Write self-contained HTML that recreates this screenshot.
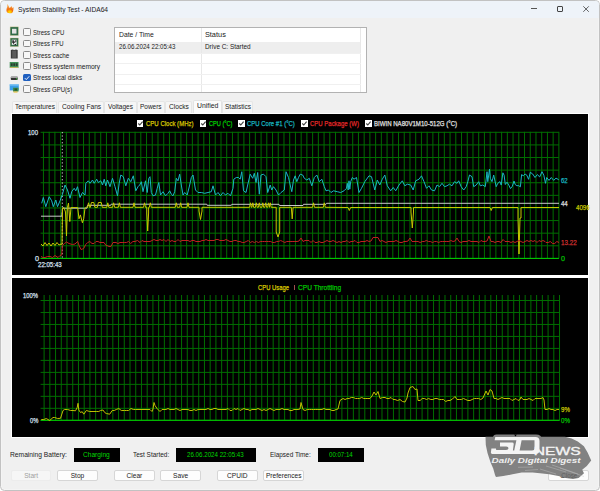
<!DOCTYPE html>
<html><head><meta charset="utf-8"><style>
html,body{margin:0;padding:0;width:600px;height:491px;overflow:hidden;background:#fff}
body{position:relative;font-family:"Liberation Sans",sans-serif}
.t{position:absolute;white-space:nowrap;font-family:"Liberation Sans",sans-serif;transform-origin:0 0}
</style></head><body>
<div style="position:absolute;left:0px;top:0px;width:600px;height:491px;box-sizing:border-box;border:1px solid #c2c2c2;border-radius:4.5px;background:#f0f0f0;box-shadow:inset 0 0 0 1px #f4f4f4"></div>
<div style="position:absolute;left:1px;top:1px;width:598px;height:16.5px;background:#eef3f9;border-radius:3.5px 3.5px 0 0"></div>
<svg style="position:absolute;left:0;top:0" width="20" height="17" viewBox="0 0 20 17">
<defs><radialGradient id="fl" cx="9.7" cy="12.2" r="6.5" gradientUnits="userSpaceOnUse"><stop offset="0" stop-color="#ffe000"/><stop offset="0.22" stop-color="#ffbb00"/><stop offset="0.5" stop-color="#f26a12"/><stop offset="1" stop-color="#f8ac50"/></radialGradient></defs>
<path d="M7.3,4.1 C8.3,5.5 9.3,7 9.6,8.3 C10.3,7.5 11,6.8 11.6,6.1 C11.8,7 12,7.5 12.3,8 C12.8,7.8 13.3,7.4 13.6,7.1 C13.6,9 13.5,11 12.5,12.5 C11.7,13.3 10.5,13.4 9.5,13.3 C8,13.2 6.8,12.5 6.5,11 C6.2,9.5 6.8,8 7.2,7 C7.5,6 7.2,5 7.3,4.1Z" fill="url(#fl)"/>
</svg>
<div class="t" style="left:18.00px;top:4.00px;font-size:7.400px;line-height:12px;letter-spacing:0.000px;transform:scaleX(0.9038);color:#1a1a1a;">System Stability Test - AIDA64</div>
<div style="position:absolute;left:531px;top:8.2px;width:6px;height:0.9px;background:#555"></div>
<div style="position:absolute;left:557px;top:6px;width:6px;height:6px;box-sizing:border-box;border:1px solid #444;border-radius:1px"></div>
<svg style="position:absolute;left:582px;top:5px" width="8" height="8" viewBox="0 0 8 8"><path d="M1.3 1.3L6.8 6.8M6.8 1.3L1.3 6.8" stroke="#333" stroke-width="0.75"/></svg>
<div style="position:absolute;left:23px;top:28.400000000000002px;width:7.5px;height:7.5px;box-sizing:border-box;border:1px solid #8a8a8a;background:#f7f7f7;border-radius:1.5px"></div>
<div class="t" style="left:32.80px;top:27.00px;font-size:7.400px;line-height:12px;letter-spacing:0.000px;transform:scaleX(0.8124);color:#1a1a1a;">Stress CPU</div>
<div style="position:absolute;left:23px;top:39.699999999999996px;width:7.5px;height:7.5px;box-sizing:border-box;border:1px solid #8a8a8a;background:#f7f7f7;border-radius:1.5px"></div>
<div class="t" style="left:32.80px;top:38.00px;font-size:7.400px;line-height:12px;letter-spacing:0.000px;transform:scaleX(0.8063);color:#1a1a1a;">Stress FPU</div>
<div style="position:absolute;left:23px;top:51.0px;width:7.5px;height:7.5px;box-sizing:border-box;border:1px solid #8a8a8a;background:#f7f7f7;border-radius:1.5px"></div>
<div class="t" style="left:32.80px;top:50.00px;font-size:7.400px;line-height:12px;letter-spacing:0.000px;transform:scaleX(0.8510);color:#1a1a1a;">Stress cache</div>
<div style="position:absolute;left:23px;top:62.39999999999999px;width:7.5px;height:7.5px;box-sizing:border-box;border:1px solid #8a8a8a;background:#f7f7f7;border-radius:1.5px"></div>
<div class="t" style="left:32.80px;top:61.00px;font-size:7.400px;line-height:12px;letter-spacing:0.000px;transform:scaleX(0.8931);color:#1a1a1a;">Stress system memory</div>
<div style="position:absolute;left:23px;top:73.7px;width:7.5px;height:7.5px;box-sizing:border-box;background:#1f5fbf;border-radius:1.5px"></div>
<svg style="position:absolute;left:23px;top:73.7px" width="8" height="8" viewBox="0 0 8 8"><path d="M1.8 4.1L3.3 5.6L6.2 2.3" fill="none" stroke="#fff" stroke-width="0.9"/></svg>
<div class="t" style="left:32.80px;top:72.00px;font-size:7.400px;line-height:12px;letter-spacing:0.000px;transform:scaleX(0.8607);color:#1a1a1a;">Stress local disks</div>
<div style="position:absolute;left:23px;top:85.2px;width:7.5px;height:7.5px;box-sizing:border-box;border:1px solid #8a8a8a;background:#f7f7f7;border-radius:1.5px"></div>
<div class="t" style="left:32.80px;top:84.00px;font-size:7.400px;line-height:12px;letter-spacing:0.000px;transform:scaleX(0.8219);color:#1a1a1a;">Stress GPU(s)</div>
<svg style="position:absolute;left:0;top:0" width="24" height="96" viewBox="0 0 24 96">
<rect x="10.1" y="26.9" width="8.3" height="8.6" fill="#2f6b47" stroke="#d8c890" stroke-width="0.4"/>
<rect x="12" y="28.8" width="4.5" height="4.8" fill="#e2e2e2"/>
<rect x="10.1" y="38" width="8.3" height="8.6" fill="#2f6b47" stroke="#d8c890" stroke-width="0.4"/>
<rect x="11.8" y="39.7" width="4.9" height="5.2" fill="#e8e8e8"/>
<path d="M12.3,40.3 h1.6 v1.2 h1.4 v1.3 h-1.4 v1.3 h2.2 v1.2 h-1.4 v-1.1 h-1.6 v-1.3 h-0.8z M15.2,40.3 h1.2 v1.5 h-1.2z" fill="#2a2a2a"/>
<path d="M10.8,50 L12.5,49.4 L14.2,50 L16,49.4 L17.7,50 V58.4 H10.8Z" fill="#3a3a3a"/>
<rect x="12.2" y="50.6" width="4.1" height="7.2" fill="#5a5a5a"/>
<rect x="9.7" y="62" width="8.8" height="5.9" fill="#3f8f55"/>
<rect x="10.8" y="63.3" width="1.8" height="2.6" fill="#2a3a30"/><rect x="13.3" y="63.3" width="1.8" height="2.6" fill="#2a3a30"/><rect x="15.8" y="63.3" width="1.8" height="2.6" fill="#2a3a30"/>
<rect x="10" y="67" width="8.2" height="0.9" fill="#c8b860"/>
<rect x="10.8" y="76.6" width="6.9" height="3.5" rx="0.8" fill="#333"/>
<rect x="10.8" y="76.6" width="6.9" height="1.2" rx="0.5" fill="#c8c8c8"/>
<rect x="16" y="78.3" width="1.1" height="1" fill="#3c3"/>
<rect x="9.7" y="84.4" width="9.1" height="6" fill="#3a9ee8"/>
<rect x="9.7" y="84.4" width="9.1" height="1.2" fill="#7cc4f4"/>
<rect x="13" y="87.7" width="5.5" height="3.8" fill="#3d8a4a"/>
<rect x="14.5" y="88.5" width="2.5" height="2" fill="#245030"/>
<rect x="13.5" y="91.5" width="4" height="1" fill="#e8b820"/>
</svg>
<div style="position:absolute;left:114px;top:27px;width:253px;height:66px;box-sizing:border-box;border:1px solid #b2b2b2;background:#fff"></div>
<div style="position:absolute;left:115px;top:42px;width:246px;height:10.5px;background:#eeeeee"></div>
<div style="position:absolute;left:200.5px;top:28px;width:0.8px;height:64px;background:#e8e8e8"></div>
<div style="position:absolute;left:360.2px;top:28px;width:0.8px;height:64px;background:#e8e8e8"></div>
<div style="position:absolute;left:115px;top:52.7px;width:246px;height:0.8px;background:#f0f0f0"></div>
<div style="position:absolute;left:115px;top:63.2px;width:246px;height:0.8px;background:#f0f0f0"></div>
<div style="position:absolute;left:115px;top:73.7px;width:246px;height:0.8px;background:#f0f0f0"></div>
<div style="position:absolute;left:115px;top:84.2px;width:246px;height:0.8px;background:#f0f0f0"></div>
<div class="t" style="left:118.50px;top:29.00px;font-size:7.400px;line-height:12px;letter-spacing:0.000px;transform:scaleX(0.9198);color:#1a1a1a;">Date / Time</div>
<div class="t" style="left:204.90px;top:29.00px;font-size:7.400px;line-height:12px;letter-spacing:0.000px;color:#1a1a1a;">Status</div>
<div class="t" style="left:118.50px;top:41.00px;font-size:7.400px;line-height:12px;letter-spacing:0.000px;transform:scaleX(0.8322);color:#1a1a1a;">26.06.2024 22:05:43</div>
<div class="t" style="left:204.90px;top:41.00px;font-size:7.400px;line-height:12px;letter-spacing:0.000px;transform:scaleX(0.8663);color:#1a1a1a;">Drive C: Started</div>
<div style="position:absolute;left:12.2px;top:100.8px;width:44.8px;height:12.7px;box-sizing:border-box;background:#f6f6f6;border:1px solid #e6e6e6;border-bottom:none;border-radius:2px 2px 0 0"></div>
<div class="t" style="left:14.75px;top:101.00px;font-size:7.400px;line-height:12px;letter-spacing:0.000px;transform:scaleX(0.8852);color:#1a1a1a;">Temperatures</div>
<div style="position:absolute;left:57.5px;top:100.8px;width:46.099999999999994px;height:12.7px;box-sizing:border-box;background:#f6f6f6;border:1px solid #e6e6e6;border-bottom:none;border-radius:2px 2px 0 0"></div>
<div class="t" style="left:61.80px;top:101.00px;font-size:7.400px;line-height:12px;letter-spacing:0.000px;transform:scaleX(0.8991);color:#1a1a1a;">Cooling Fans</div>
<div style="position:absolute;left:104.0px;top:100.8px;width:32.900000000000006px;height:12.7px;box-sizing:border-box;background:#f6f6f6;border:1px solid #e6e6e6;border-bottom:none;border-radius:2px 2px 0 0"></div>
<div class="t" style="left:107.90px;top:101.00px;font-size:7.400px;line-height:12px;letter-spacing:0.000px;transform:scaleX(0.8772);color:#1a1a1a;">Voltages</div>
<div style="position:absolute;left:137.3px;top:100.8px;width:27.399999999999977px;height:12.7px;box-sizing:border-box;background:#f6f6f6;border:1px solid #e6e6e6;border-bottom:none;border-radius:2px 2px 0 0"></div>
<div class="t" style="left:140.40px;top:101.00px;font-size:7.400px;line-height:12px;letter-spacing:0.000px;transform:scaleX(0.8752);color:#1a1a1a;">Powers</div>
<div style="position:absolute;left:165.0px;top:100.8px;width:27.0px;height:12.7px;box-sizing:border-box;background:#f6f6f6;border:1px solid #e6e6e6;border-bottom:none;border-radius:2px 2px 0 0"></div>
<div class="t" style="left:169.00px;top:101.00px;font-size:7.400px;line-height:12px;letter-spacing:0.000px;transform:scaleX(0.8961);color:#1a1a1a;">Clocks</div>
<div style="position:absolute;left:192.7px;top:99.7px;width:29.30000000000001px;height:14.3px;box-sizing:border-box;background:#fbfbfb;border:1px solid #e3e3e3;border-bottom:none;border-radius:2px 2px 0 0"></div>
<div class="t" style="left:196.70px;top:100.00px;font-size:7.400px;line-height:12px;letter-spacing:0.000px;transform:scaleX(0.9246);color:#1a1a1a;">Unified</div>
<div style="position:absolute;left:222.4px;top:100.8px;width:30.900000000000006px;height:12.7px;box-sizing:border-box;background:#f6f6f6;border:1px solid #e6e6e6;border-bottom:none;border-radius:2px 2px 0 0"></div>
<div class="t" style="left:225.00px;top:101.00px;font-size:7.400px;line-height:12px;letter-spacing:0.000px;transform:scaleX(0.8782);color:#1a1a1a;">Statistics</div>
<div style="position:absolute;left:10.5px;top:113px;width:578.7px;height:325px;background:#fff"></div>
<div style="position:absolute;left:12px;top:114px;width:576px;height:161px;background:#000"></div>
<div style="position:absolute;left:12px;top:278px;width:576px;height:158.7px;background:#000"></div>
<svg style="position:absolute;left:0;top:0" width="600" height="491" viewBox="0 0 600 491">
<line x1="43.45" y1="131.8" x2="43.45" y2="258.4" stroke="#006e00" stroke-width="1"/>
<line x1="49.18" y1="131.8" x2="49.18" y2="258.4" stroke="#006e00" stroke-width="1"/>
<line x1="54.90" y1="131.8" x2="54.90" y2="258.4" stroke="#006e00" stroke-width="1"/>
<line x1="60.63" y1="131.8" x2="60.63" y2="258.4" stroke="#006e00" stroke-width="1"/>
<line x1="66.36" y1="131.8" x2="66.36" y2="258.4" stroke="#006e00" stroke-width="1"/>
<line x1="72.09" y1="131.8" x2="72.09" y2="258.4" stroke="#006e00" stroke-width="1"/>
<line x1="77.81" y1="131.8" x2="77.81" y2="258.4" stroke="#006e00" stroke-width="1"/>
<line x1="83.54" y1="131.8" x2="83.54" y2="258.4" stroke="#006e00" stroke-width="1"/>
<line x1="89.27" y1="131.8" x2="89.27" y2="258.4" stroke="#006e00" stroke-width="1"/>
<line x1="94.99" y1="131.8" x2="94.99" y2="258.4" stroke="#006e00" stroke-width="1"/>
<line x1="100.72" y1="131.8" x2="100.72" y2="258.4" stroke="#006e00" stroke-width="1"/>
<line x1="106.45" y1="131.8" x2="106.45" y2="258.4" stroke="#006e00" stroke-width="1"/>
<line x1="112.17" y1="131.8" x2="112.17" y2="258.4" stroke="#006e00" stroke-width="1"/>
<line x1="117.90" y1="131.8" x2="117.90" y2="258.4" stroke="#006e00" stroke-width="1"/>
<line x1="123.63" y1="131.8" x2="123.63" y2="258.4" stroke="#006e00" stroke-width="1"/>
<line x1="129.36" y1="131.8" x2="129.36" y2="258.4" stroke="#006e00" stroke-width="1"/>
<line x1="135.08" y1="131.8" x2="135.08" y2="258.4" stroke="#006e00" stroke-width="1"/>
<line x1="140.81" y1="131.8" x2="140.81" y2="258.4" stroke="#006e00" stroke-width="1"/>
<line x1="146.54" y1="131.8" x2="146.54" y2="258.4" stroke="#006e00" stroke-width="1"/>
<line x1="152.26" y1="131.8" x2="152.26" y2="258.4" stroke="#006e00" stroke-width="1"/>
<line x1="157.99" y1="131.8" x2="157.99" y2="258.4" stroke="#006e00" stroke-width="1"/>
<line x1="163.72" y1="131.8" x2="163.72" y2="258.4" stroke="#006e00" stroke-width="1"/>
<line x1="169.44" y1="131.8" x2="169.44" y2="258.4" stroke="#006e00" stroke-width="1"/>
<line x1="175.17" y1="131.8" x2="175.17" y2="258.4" stroke="#006e00" stroke-width="1"/>
<line x1="180.90" y1="131.8" x2="180.90" y2="258.4" stroke="#006e00" stroke-width="1"/>
<line x1="186.62" y1="131.8" x2="186.62" y2="258.4" stroke="#006e00" stroke-width="1"/>
<line x1="192.35" y1="131.8" x2="192.35" y2="258.4" stroke="#006e00" stroke-width="1"/>
<line x1="198.08" y1="131.8" x2="198.08" y2="258.4" stroke="#006e00" stroke-width="1"/>
<line x1="203.81" y1="131.8" x2="203.81" y2="258.4" stroke="#006e00" stroke-width="1"/>
<line x1="209.53" y1="131.8" x2="209.53" y2="258.4" stroke="#006e00" stroke-width="1"/>
<line x1="215.26" y1="131.8" x2="215.26" y2="258.4" stroke="#006e00" stroke-width="1"/>
<line x1="220.99" y1="131.8" x2="220.99" y2="258.4" stroke="#006e00" stroke-width="1"/>
<line x1="226.71" y1="131.8" x2="226.71" y2="258.4" stroke="#006e00" stroke-width="1"/>
<line x1="232.44" y1="131.8" x2="232.44" y2="258.4" stroke="#006e00" stroke-width="1"/>
<line x1="238.17" y1="131.8" x2="238.17" y2="258.4" stroke="#006e00" stroke-width="1"/>
<line x1="243.90" y1="131.8" x2="243.90" y2="258.4" stroke="#006e00" stroke-width="1"/>
<line x1="249.62" y1="131.8" x2="249.62" y2="258.4" stroke="#006e00" stroke-width="1"/>
<line x1="255.35" y1="131.8" x2="255.35" y2="258.4" stroke="#006e00" stroke-width="1"/>
<line x1="261.08" y1="131.8" x2="261.08" y2="258.4" stroke="#006e00" stroke-width="1"/>
<line x1="266.80" y1="131.8" x2="266.80" y2="258.4" stroke="#006e00" stroke-width="1"/>
<line x1="272.53" y1="131.8" x2="272.53" y2="258.4" stroke="#006e00" stroke-width="1"/>
<line x1="278.26" y1="131.8" x2="278.26" y2="258.4" stroke="#006e00" stroke-width="1"/>
<line x1="283.98" y1="131.8" x2="283.98" y2="258.4" stroke="#006e00" stroke-width="1"/>
<line x1="289.71" y1="131.8" x2="289.71" y2="258.4" stroke="#006e00" stroke-width="1"/>
<line x1="295.44" y1="131.8" x2="295.44" y2="258.4" stroke="#006e00" stroke-width="1"/>
<line x1="301.17" y1="131.8" x2="301.17" y2="258.4" stroke="#006e00" stroke-width="1"/>
<line x1="306.89" y1="131.8" x2="306.89" y2="258.4" stroke="#006e00" stroke-width="1"/>
<line x1="312.62" y1="131.8" x2="312.62" y2="258.4" stroke="#006e00" stroke-width="1"/>
<line x1="318.35" y1="131.8" x2="318.35" y2="258.4" stroke="#006e00" stroke-width="1"/>
<line x1="324.07" y1="131.8" x2="324.07" y2="258.4" stroke="#006e00" stroke-width="1"/>
<line x1="329.80" y1="131.8" x2="329.80" y2="258.4" stroke="#006e00" stroke-width="1"/>
<line x1="335.53" y1="131.8" x2="335.53" y2="258.4" stroke="#006e00" stroke-width="1"/>
<line x1="341.25" y1="131.8" x2="341.25" y2="258.4" stroke="#006e00" stroke-width="1"/>
<line x1="346.98" y1="131.8" x2="346.98" y2="258.4" stroke="#006e00" stroke-width="1"/>
<line x1="352.71" y1="131.8" x2="352.71" y2="258.4" stroke="#006e00" stroke-width="1"/>
<line x1="358.44" y1="131.8" x2="358.44" y2="258.4" stroke="#006e00" stroke-width="1"/>
<line x1="364.16" y1="131.8" x2="364.16" y2="258.4" stroke="#006e00" stroke-width="1"/>
<line x1="369.89" y1="131.8" x2="369.89" y2="258.4" stroke="#006e00" stroke-width="1"/>
<line x1="375.62" y1="131.8" x2="375.62" y2="258.4" stroke="#006e00" stroke-width="1"/>
<line x1="381.34" y1="131.8" x2="381.34" y2="258.4" stroke="#006e00" stroke-width="1"/>
<line x1="387.07" y1="131.8" x2="387.07" y2="258.4" stroke="#006e00" stroke-width="1"/>
<line x1="392.80" y1="131.8" x2="392.80" y2="258.4" stroke="#006e00" stroke-width="1"/>
<line x1="398.52" y1="131.8" x2="398.52" y2="258.4" stroke="#006e00" stroke-width="1"/>
<line x1="404.25" y1="131.8" x2="404.25" y2="258.4" stroke="#006e00" stroke-width="1"/>
<line x1="409.98" y1="131.8" x2="409.98" y2="258.4" stroke="#006e00" stroke-width="1"/>
<line x1="415.70" y1="131.8" x2="415.70" y2="258.4" stroke="#006e00" stroke-width="1"/>
<line x1="421.43" y1="131.8" x2="421.43" y2="258.4" stroke="#006e00" stroke-width="1"/>
<line x1="427.16" y1="131.8" x2="427.16" y2="258.4" stroke="#006e00" stroke-width="1"/>
<line x1="432.89" y1="131.8" x2="432.89" y2="258.4" stroke="#006e00" stroke-width="1"/>
<line x1="438.61" y1="131.8" x2="438.61" y2="258.4" stroke="#006e00" stroke-width="1"/>
<line x1="444.34" y1="131.8" x2="444.34" y2="258.4" stroke="#006e00" stroke-width="1"/>
<line x1="450.07" y1="131.8" x2="450.07" y2="258.4" stroke="#006e00" stroke-width="1"/>
<line x1="455.79" y1="131.8" x2="455.79" y2="258.4" stroke="#006e00" stroke-width="1"/>
<line x1="461.52" y1="131.8" x2="461.52" y2="258.4" stroke="#006e00" stroke-width="1"/>
<line x1="467.25" y1="131.8" x2="467.25" y2="258.4" stroke="#006e00" stroke-width="1"/>
<line x1="472.98" y1="131.8" x2="472.98" y2="258.4" stroke="#006e00" stroke-width="1"/>
<line x1="478.70" y1="131.8" x2="478.70" y2="258.4" stroke="#006e00" stroke-width="1"/>
<line x1="484.43" y1="131.8" x2="484.43" y2="258.4" stroke="#006e00" stroke-width="1"/>
<line x1="490.16" y1="131.8" x2="490.16" y2="258.4" stroke="#006e00" stroke-width="1"/>
<line x1="495.88" y1="131.8" x2="495.88" y2="258.4" stroke="#006e00" stroke-width="1"/>
<line x1="501.61" y1="131.8" x2="501.61" y2="258.4" stroke="#006e00" stroke-width="1"/>
<line x1="507.34" y1="131.8" x2="507.34" y2="258.4" stroke="#006e00" stroke-width="1"/>
<line x1="513.06" y1="131.8" x2="513.06" y2="258.4" stroke="#006e00" stroke-width="1"/>
<line x1="518.79" y1="131.8" x2="518.79" y2="258.4" stroke="#006e00" stroke-width="1"/>
<line x1="524.52" y1="131.8" x2="524.52" y2="258.4" stroke="#006e00" stroke-width="1"/>
<line x1="530.25" y1="131.8" x2="530.25" y2="258.4" stroke="#006e00" stroke-width="1"/>
<line x1="535.97" y1="131.8" x2="535.97" y2="258.4" stroke="#006e00" stroke-width="1"/>
<line x1="541.70" y1="131.8" x2="541.70" y2="258.4" stroke="#006e00" stroke-width="1"/>
<line x1="547.43" y1="131.8" x2="547.43" y2="258.4" stroke="#006e00" stroke-width="1"/>
<line x1="553.15" y1="131.8" x2="553.15" y2="258.4" stroke="#006e00" stroke-width="1"/>
<line x1="558.88" y1="131.8" x2="558.88" y2="258.4" stroke="#006e00" stroke-width="1"/>
<line x1="40.6" y1="132.30" x2="558.9" y2="132.30" stroke="#006e00" stroke-width="1"/>
<line x1="40.6" y1="144.91" x2="558.9" y2="144.91" stroke="#006e00" stroke-width="1"/>
<line x1="40.6" y1="157.52" x2="558.9" y2="157.52" stroke="#006e00" stroke-width="1"/>
<line x1="40.6" y1="170.13" x2="558.9" y2="170.13" stroke="#006e00" stroke-width="1"/>
<line x1="40.6" y1="182.74" x2="558.9" y2="182.74" stroke="#006e00" stroke-width="1"/>
<line x1="40.6" y1="195.35" x2="558.9" y2="195.35" stroke="#006e00" stroke-width="1"/>
<line x1="40.6" y1="207.96" x2="558.9" y2="207.96" stroke="#006e00" stroke-width="1"/>
<line x1="40.6" y1="220.57" x2="558.9" y2="220.57" stroke="#006e00" stroke-width="1"/>
<line x1="40.6" y1="233.18" x2="558.9" y2="233.18" stroke="#006e00" stroke-width="1"/>
<line x1="40.6" y1="245.79" x2="558.9" y2="245.79" stroke="#006e00" stroke-width="1"/>
<line x1="40.6" y1="258.40" x2="558.9" y2="258.40" stroke="#006e00" stroke-width="1"/>
<line x1="44.10" y1="295" x2="44.10" y2="420.3" stroke="#006e00" stroke-width="1"/>
<line x1="49.83" y1="295" x2="49.83" y2="420.3" stroke="#006e00" stroke-width="1"/>
<line x1="55.55" y1="295" x2="55.55" y2="420.3" stroke="#006e00" stroke-width="1"/>
<line x1="61.28" y1="295" x2="61.28" y2="420.3" stroke="#006e00" stroke-width="1"/>
<line x1="67.01" y1="295" x2="67.01" y2="420.3" stroke="#006e00" stroke-width="1"/>
<line x1="72.73" y1="295" x2="72.73" y2="420.3" stroke="#006e00" stroke-width="1"/>
<line x1="78.46" y1="295" x2="78.46" y2="420.3" stroke="#006e00" stroke-width="1"/>
<line x1="84.19" y1="295" x2="84.19" y2="420.3" stroke="#006e00" stroke-width="1"/>
<line x1="89.92" y1="295" x2="89.92" y2="420.3" stroke="#006e00" stroke-width="1"/>
<line x1="95.64" y1="295" x2="95.64" y2="420.3" stroke="#006e00" stroke-width="1"/>
<line x1="101.37" y1="295" x2="101.37" y2="420.3" stroke="#006e00" stroke-width="1"/>
<line x1="107.10" y1="295" x2="107.10" y2="420.3" stroke="#006e00" stroke-width="1"/>
<line x1="112.82" y1="295" x2="112.82" y2="420.3" stroke="#006e00" stroke-width="1"/>
<line x1="118.55" y1="295" x2="118.55" y2="420.3" stroke="#006e00" stroke-width="1"/>
<line x1="124.28" y1="295" x2="124.28" y2="420.3" stroke="#006e00" stroke-width="1"/>
<line x1="130.00" y1="295" x2="130.00" y2="420.3" stroke="#006e00" stroke-width="1"/>
<line x1="135.73" y1="295" x2="135.73" y2="420.3" stroke="#006e00" stroke-width="1"/>
<line x1="141.46" y1="295" x2="141.46" y2="420.3" stroke="#006e00" stroke-width="1"/>
<line x1="147.19" y1="295" x2="147.19" y2="420.3" stroke="#006e00" stroke-width="1"/>
<line x1="152.91" y1="295" x2="152.91" y2="420.3" stroke="#006e00" stroke-width="1"/>
<line x1="158.64" y1="295" x2="158.64" y2="420.3" stroke="#006e00" stroke-width="1"/>
<line x1="164.37" y1="295" x2="164.37" y2="420.3" stroke="#006e00" stroke-width="1"/>
<line x1="170.09" y1="295" x2="170.09" y2="420.3" stroke="#006e00" stroke-width="1"/>
<line x1="175.82" y1="295" x2="175.82" y2="420.3" stroke="#006e00" stroke-width="1"/>
<line x1="181.55" y1="295" x2="181.55" y2="420.3" stroke="#006e00" stroke-width="1"/>
<line x1="187.28" y1="295" x2="187.28" y2="420.3" stroke="#006e00" stroke-width="1"/>
<line x1="193.00" y1="295" x2="193.00" y2="420.3" stroke="#006e00" stroke-width="1"/>
<line x1="198.73" y1="295" x2="198.73" y2="420.3" stroke="#006e00" stroke-width="1"/>
<line x1="204.46" y1="295" x2="204.46" y2="420.3" stroke="#006e00" stroke-width="1"/>
<line x1="210.18" y1="295" x2="210.18" y2="420.3" stroke="#006e00" stroke-width="1"/>
<line x1="215.91" y1="295" x2="215.91" y2="420.3" stroke="#006e00" stroke-width="1"/>
<line x1="221.64" y1="295" x2="221.64" y2="420.3" stroke="#006e00" stroke-width="1"/>
<line x1="227.36" y1="295" x2="227.36" y2="420.3" stroke="#006e00" stroke-width="1"/>
<line x1="233.09" y1="295" x2="233.09" y2="420.3" stroke="#006e00" stroke-width="1"/>
<line x1="238.82" y1="295" x2="238.82" y2="420.3" stroke="#006e00" stroke-width="1"/>
<line x1="244.55" y1="295" x2="244.55" y2="420.3" stroke="#006e00" stroke-width="1"/>
<line x1="250.27" y1="295" x2="250.27" y2="420.3" stroke="#006e00" stroke-width="1"/>
<line x1="256.00" y1="295" x2="256.00" y2="420.3" stroke="#006e00" stroke-width="1"/>
<line x1="261.73" y1="295" x2="261.73" y2="420.3" stroke="#006e00" stroke-width="1"/>
<line x1="267.45" y1="295" x2="267.45" y2="420.3" stroke="#006e00" stroke-width="1"/>
<line x1="273.18" y1="295" x2="273.18" y2="420.3" stroke="#006e00" stroke-width="1"/>
<line x1="278.91" y1="295" x2="278.91" y2="420.3" stroke="#006e00" stroke-width="1"/>
<line x1="284.63" y1="295" x2="284.63" y2="420.3" stroke="#006e00" stroke-width="1"/>
<line x1="290.36" y1="295" x2="290.36" y2="420.3" stroke="#006e00" stroke-width="1"/>
<line x1="296.09" y1="295" x2="296.09" y2="420.3" stroke="#006e00" stroke-width="1"/>
<line x1="301.82" y1="295" x2="301.82" y2="420.3" stroke="#006e00" stroke-width="1"/>
<line x1="307.54" y1="295" x2="307.54" y2="420.3" stroke="#006e00" stroke-width="1"/>
<line x1="313.27" y1="295" x2="313.27" y2="420.3" stroke="#006e00" stroke-width="1"/>
<line x1="319.00" y1="295" x2="319.00" y2="420.3" stroke="#006e00" stroke-width="1"/>
<line x1="324.72" y1="295" x2="324.72" y2="420.3" stroke="#006e00" stroke-width="1"/>
<line x1="330.45" y1="295" x2="330.45" y2="420.3" stroke="#006e00" stroke-width="1"/>
<line x1="336.18" y1="295" x2="336.18" y2="420.3" stroke="#006e00" stroke-width="1"/>
<line x1="341.90" y1="295" x2="341.90" y2="420.3" stroke="#006e00" stroke-width="1"/>
<line x1="347.63" y1="295" x2="347.63" y2="420.3" stroke="#006e00" stroke-width="1"/>
<line x1="353.36" y1="295" x2="353.36" y2="420.3" stroke="#006e00" stroke-width="1"/>
<line x1="359.09" y1="295" x2="359.09" y2="420.3" stroke="#006e00" stroke-width="1"/>
<line x1="364.81" y1="295" x2="364.81" y2="420.3" stroke="#006e00" stroke-width="1"/>
<line x1="370.54" y1="295" x2="370.54" y2="420.3" stroke="#006e00" stroke-width="1"/>
<line x1="376.27" y1="295" x2="376.27" y2="420.3" stroke="#006e00" stroke-width="1"/>
<line x1="381.99" y1="295" x2="381.99" y2="420.3" stroke="#006e00" stroke-width="1"/>
<line x1="387.72" y1="295" x2="387.72" y2="420.3" stroke="#006e00" stroke-width="1"/>
<line x1="393.45" y1="295" x2="393.45" y2="420.3" stroke="#006e00" stroke-width="1"/>
<line x1="399.17" y1="295" x2="399.17" y2="420.3" stroke="#006e00" stroke-width="1"/>
<line x1="404.90" y1="295" x2="404.90" y2="420.3" stroke="#006e00" stroke-width="1"/>
<line x1="410.63" y1="295" x2="410.63" y2="420.3" stroke="#006e00" stroke-width="1"/>
<line x1="416.36" y1="295" x2="416.36" y2="420.3" stroke="#006e00" stroke-width="1"/>
<line x1="422.08" y1="295" x2="422.08" y2="420.3" stroke="#006e00" stroke-width="1"/>
<line x1="427.81" y1="295" x2="427.81" y2="420.3" stroke="#006e00" stroke-width="1"/>
<line x1="433.54" y1="295" x2="433.54" y2="420.3" stroke="#006e00" stroke-width="1"/>
<line x1="439.26" y1="295" x2="439.26" y2="420.3" stroke="#006e00" stroke-width="1"/>
<line x1="444.99" y1="295" x2="444.99" y2="420.3" stroke="#006e00" stroke-width="1"/>
<line x1="450.72" y1="295" x2="450.72" y2="420.3" stroke="#006e00" stroke-width="1"/>
<line x1="456.44" y1="295" x2="456.44" y2="420.3" stroke="#006e00" stroke-width="1"/>
<line x1="462.17" y1="295" x2="462.17" y2="420.3" stroke="#006e00" stroke-width="1"/>
<line x1="467.90" y1="295" x2="467.90" y2="420.3" stroke="#006e00" stroke-width="1"/>
<line x1="473.63" y1="295" x2="473.63" y2="420.3" stroke="#006e00" stroke-width="1"/>
<line x1="479.35" y1="295" x2="479.35" y2="420.3" stroke="#006e00" stroke-width="1"/>
<line x1="485.08" y1="295" x2="485.08" y2="420.3" stroke="#006e00" stroke-width="1"/>
<line x1="490.81" y1="295" x2="490.81" y2="420.3" stroke="#006e00" stroke-width="1"/>
<line x1="496.53" y1="295" x2="496.53" y2="420.3" stroke="#006e00" stroke-width="1"/>
<line x1="502.26" y1="295" x2="502.26" y2="420.3" stroke="#006e00" stroke-width="1"/>
<line x1="507.99" y1="295" x2="507.99" y2="420.3" stroke="#006e00" stroke-width="1"/>
<line x1="513.71" y1="295" x2="513.71" y2="420.3" stroke="#006e00" stroke-width="1"/>
<line x1="519.44" y1="295" x2="519.44" y2="420.3" stroke="#006e00" stroke-width="1"/>
<line x1="525.17" y1="295" x2="525.17" y2="420.3" stroke="#006e00" stroke-width="1"/>
<line x1="530.89" y1="295" x2="530.89" y2="420.3" stroke="#006e00" stroke-width="1"/>
<line x1="536.62" y1="295" x2="536.62" y2="420.3" stroke="#006e00" stroke-width="1"/>
<line x1="542.35" y1="295" x2="542.35" y2="420.3" stroke="#006e00" stroke-width="1"/>
<line x1="548.08" y1="295" x2="548.08" y2="420.3" stroke="#006e00" stroke-width="1"/>
<line x1="553.80" y1="295" x2="553.80" y2="420.3" stroke="#006e00" stroke-width="1"/>
<line x1="559.53" y1="295" x2="559.53" y2="420.3" stroke="#006e00" stroke-width="1"/>
<line x1="40.6" y1="300.50" x2="559.6" y2="300.50" stroke="#006e00" stroke-width="1"/>
<line x1="40.6" y1="312.48" x2="559.6" y2="312.48" stroke="#006e00" stroke-width="1"/>
<line x1="40.6" y1="324.46" x2="559.6" y2="324.46" stroke="#006e00" stroke-width="1"/>
<line x1="40.6" y1="336.44" x2="559.6" y2="336.44" stroke="#006e00" stroke-width="1"/>
<line x1="40.6" y1="348.42" x2="559.6" y2="348.42" stroke="#006e00" stroke-width="1"/>
<line x1="40.6" y1="360.40" x2="559.6" y2="360.40" stroke="#006e00" stroke-width="1"/>
<line x1="40.6" y1="372.38" x2="559.6" y2="372.38" stroke="#006e00" stroke-width="1"/>
<line x1="40.6" y1="384.36" x2="559.6" y2="384.36" stroke="#006e00" stroke-width="1"/>
<line x1="40.6" y1="396.34" x2="559.6" y2="396.34" stroke="#006e00" stroke-width="1"/>
<line x1="40.6" y1="408.32" x2="559.6" y2="408.32" stroke="#006e00" stroke-width="1"/>
<line x1="40.6" y1="420.30" x2="559.6" y2="420.30" stroke="#006e00" stroke-width="1"/>
<polyline points="40.6,258.4 558.9,258.4" fill="none" stroke="#00d000" stroke-width="1.0" stroke-opacity="1.0" stroke-linejoin="round"/>
<polyline points="40.6,420.3 559.6,420.3" fill="none" stroke="#00d000" stroke-width="1.0" stroke-opacity="1.0" stroke-linejoin="round"/>
<line x1="62.3" y1="132" x2="62.3" y2="258" stroke="#e0e0e0" stroke-width="0.9" stroke-dasharray="1.3,2.06"/>
<polyline points="41.7,203.3 43.3,197.5 45.8,206.7 49.2,196.7 51.7,200.8 53.3,206.7 55.8,200.0 57.5,206.7 60.0,200.8 62.5,194.2 65.0,185.0 67.5,190.0 70.0,198.3 71.7,191.7 74.2,188.3 75.8,190.8 77.5,186.7 80.0,197.5 82.5,192.5 85.0,195.0 85.8,183.3 88.3,180.8 90.0,183.3 92.5,180.0 94.2,183.3 96.7,179.2 98.3,182.5 100.8,180.8 102.5,185.0 104.2,179.2 105.8,185.8 107.5,180.0 110.0,186.7 112.5,178.3 115.0,186.7 117.5,195.8 119.2,183.3 120.8,175.0 123.3,176.7 125.8,185.8 128.3,178.3 130.8,181.7 133.3,175.8 135.8,190.8 138.0,186.7 139.7,185.0 141.3,181.7 143.0,191.7 145.5,180.8 147.2,192.5 148.8,178.3 150.0,176.7 151.3,192.5 153.0,195.8 155.5,195.0 157.2,188.3 158.8,182.5 160.5,195.0 163.0,191.7 165.5,195.8 168.0,193.3 169.7,190.8 171.3,194.2 173.0,195.8 174.7,191.7 176.3,178.3 178.0,180.8 179.7,174.2 181.3,185.0 183.0,195.0 184.7,192.5 187.2,195.0 189.7,185.0 191.3,177.5 193.0,175.0 195.5,190.0 198.0,192.5 201.3,192.5 204.7,193.3 208.0,192.5 211.3,191.7 213.0,185.8 215.5,195.0 218.0,192.5 220.5,195.8 223.0,192.5 225.5,195.0 228.0,193.3 230.5,195.8 233.0,188.3 233.8,179.2 236.3,177.5 238.5,177.5 240.2,179.2 241.8,171.7 243.5,190.8 246.0,192.5 247.7,185.0 250.2,174.2 252.7,178.3 254.3,173.3 256.0,182.5 257.7,172.5 259.3,194.2 261.0,175.0 263.5,174.2 266.0,176.7 267.7,192.5 270.2,185.0 271.8,190.0 273.5,186.7 276.0,190.0 278.5,195.0 281.0,192.5 284.3,190.0 286.0,171.7 288.5,177.5 290.2,185.0 291.8,191.7 293.5,180.0 295.2,175.8 296.8,181.7 298.5,177.5 300.2,174.2 302.7,175.0 304.3,178.3 306.8,180.0 309.3,178.3 311.8,185.8 314.3,177.5 316.8,175.0 319.3,181.7 321.8,179.2 324.3,186.7 326.0,190.8 328.5,190.0 331.0,192.5 333.5,190.8 337.3,191.7 340.7,192.5 344.0,190.8 346.5,188.3 347.3,183.3 348.2,190.0 349.0,180.8 349.8,189.2 350.7,181.7 352.3,177.5 354.0,179.2 356.5,177.5 359.0,192.5 361.5,188.3 364.8,181.7 369.0,175.8 371.5,176.7 374.8,190.0 377.3,180.0 379.8,185.0 382.3,179.2 384.8,175.0 387.3,185.8 390.7,190.8 393.2,187.5 395.7,190.8 399.0,185.0 402.3,180.8 404.8,185.8 407.3,184.2 410.7,185.0 413.2,190.0 415.7,180.8 419.0,179.2 421.5,175.8 424.0,181.7 426.5,188.3 429.0,185.8 431.5,190.0 434.5,190.8 437.0,185.0 439.5,186.7 442.0,183.3 444.5,186.7 447.0,185.8 449.5,184.2 452.0,185.8 454.5,181.7 457.0,183.3 458.7,180.8 461.2,186.7 463.7,190.0 466.2,186.7 467.8,181.7 469.5,175.0 472.0,176.7 473.7,186.7 476.2,185.0 478.7,181.7 480.3,185.8 482.8,185.0 485.3,186.7 487.0,171.7 487.8,181.7 489.5,169.2 490.3,178.3 492.0,181.7 493.7,175.0 496.2,186.7 497.8,183.3 500.0,181.6 501.2,185.1 502.9,172.8 504.1,175.2 505.3,184.5 507.0,182.2 508.8,185.1 510.5,188.6 512.3,186.3 514.0,181.0 515.2,184.5 516.9,185.7 518.7,185.7 520.4,186.8 521.6,174.6 523.3,175.8 525.1,174.0 526.8,175.2 528.6,179.3 530.3,172.3 532.7,174.0 535.0,177.5 537.3,174.6 539.7,176.9 542.0,171.7 543.8,175.2 545.5,183.3 546.7,177.5 549.0,180.4 551.3,177.5 553.7,180.4 556.0,178.1 558.8,179.8" fill="none" stroke="#18b8c0" stroke-width="1.0" stroke-opacity="1.0" stroke-linejoin="round"/>
<polyline points="41.0,216.2 61.8,216.2 62.5,208.2 87.0,208.2 87.5,205.3 110.7,205.3 111.2,204.2 206.7,204.2 207.2,205.3 231.3,205.3 231.8,204.3 279.0,204.3 279.5,205.5 303.0,205.5 303.5,204.3 326.0,204.3 326.5,203.3 559.0,203.3" fill="none" stroke="#c8c8c8" stroke-width="1.0" stroke-opacity="1.0" stroke-linejoin="round"/>
<polyline points="41.0,244.0 43.0,246.0 45.0,242.5 47.0,245.5 49.0,243.0 51.0,246.0 53.0,243.0 55.0,245.5 57.0,242.5 59.0,245.0 61.0,244.0 62.0,244.5 62.5,208.0 64.0,207.6 65.5,212.0 66.5,236.0 67.4,207.6 68.5,203.0 69.8,221.5 71.0,207.6 77.7,207.6 79.0,218.8 80.4,214.9 82.4,222.8 83.7,218.8 85.0,208.2 86.5,207.3 87.5,207.3 88.5,202.8 89.5,207.3 90.4,207.3 91.4,202.5 93.8,202.5 94.8,207.3 97.4,207.3 98.4,202.5 101.3,202.5 102.3,207.3 106.8,207.3 107.8,202.8 108.8,207.3 112.6,207.3 113.6,202.8 114.6,207.3 118.4,207.3 119.4,202.8 120.4,207.3 133.0,207.3 134.0,202.8 135.0,207.3 143.5,207.3 144.5,202.8 145.5,207.3 146.8,207.3 146.8,213.0 147.7,231.0 148.6,213.0 148.6,207.3 149.3,207.3 150.3,202.8 151.3,207.3 175.3,207.3 176.3,202.8 177.3,207.3 179.6,207.3 180.6,202.8 181.6,207.3 187.0,207.3 188.0,202.8 189.0,207.3 199.0,207.3 199.0,211.0 200.5,219.5 202.0,211.0 202.0,207.3 249.6,207.3 250.5,202.8 251.4,207.3 251.9,207.3 252.8,202.8 253.7,207.3 255.4,207.3 256.3,202.8 257.2,207.3 258.4,207.3 259.3,202.8 260.2,207.3 261.9,207.3 262.8,202.8 263.7,207.3 264.8,207.3 265.7,202.8 266.6,207.3 267.7,207.3 268.6,202.8 269.5,207.3 269.4,207.3 270.3,202.8 271.2,207.3 276.2,207.3 276.2,232.0 278.0,237.0 279.7,232.0 279.7,207.3 291.3,207.3 292.2,218.9 293.1,207.3 312.5,207.3 313.5,202.8 314.5,207.3 323.3,207.3 324.3,202.8 325.3,207.3 348.0,207.5 349.3,210.5 350.6,207.5 411.0,207.5 411.0,212.0 412.3,228.0 413.5,212.0 413.5,207.5 490.0,207.5 491.2,210.5 492.4,207.5 518.0,207.5 518.0,218.0 519.0,254.0 520.0,218.0 521.0,218.0 521.0,207.5 559.0,207.5" fill="none" stroke="#c8c800" stroke-width="1.0" stroke-opacity="1.0" stroke-linejoin="round"/>
<polyline points="41.0,256.5 43.0,257.5 45.0,257.5 47.5,256.5 50.0,256.5 52.5,257.5 55.0,255.5 58.0,257.5 60.0,255.5 61.8,255.0 62.3,245.5 64.5,243.5 66.5,242.0 69.0,243.5 72.4,244.5 75.0,244.0 77.7,241.4 79.0,245.3 81.0,249.5 83.7,248.6 85.7,244.5 87.7,242.5 89.8,241.5 92.0,243.5 94.0,243.5 96.0,241.5 98.0,241.5 100.0,242.5 102.0,242.5 104.0,242.5 106.0,245.5 107.0,245.5 109.0,246.5 111.0,246.4 113.0,242.5 116.0,242.5 118.0,243.5 120.0,242.5 122.1,242.5 124.3,242.5 126.4,242.5 128.6,241.5 130.7,243.5 132.9,241.5 135.0,241.5 137.5,240.5 140.0,242.5 142.0,240.5 144.0,241.5 146.0,241.5 148.0,241.5 150.0,241.5 152.0,240.5 154.0,239.5 156.0,240.5 158.0,240.5 160.0,239.5 162.0,240.5 164.0,239.5 166.0,241.5 168.0,239.5 170.0,241.5 172.0,240.5 174.0,241.5 176.0,241.5 178.0,239.5 180.0,241.5 182.0,240.5 184.0,240.5 186.0,240.5 188.0,240.5 190.0,241.5 192.0,240.5 194.0,240.5 196.0,241.5 198.0,241.5 200.0,241.5 202.0,240.5 204.0,240.5 206.0,239.5 208.0,240.5 210.0,240.5 212.0,240.5 214.0,240.5 216.0,239.5 218.0,239.5 220.0,240.5 222.0,240.5 224.0,240.5 226.0,239.5 228.0,240.5 230.0,241.5 232.0,241.5 234.1,240.5 236.1,240.5 238.1,241.5 240.1,241.5 242.2,242.5 244.2,242.5 246.2,241.5 248.3,240.5 250.3,242.5 252.3,241.5 254.4,242.5 256.4,241.5 258.4,242.5 260.4,241.5 262.5,241.5 264.5,241.5 266.5,241.5 268.6,241.5 270.6,241.5 272.6,242.5 274.6,242.5 276.7,241.5 278.7,241.5 280.7,240.5 282.8,241.5 284.8,242.5 286.8,241.5 288.9,241.5 290.9,241.5 292.9,241.5 294.9,241.5 297.0,241.5 299.0,241.0 301.0,238.0 303.0,241.5 305.0,240.5 307.0,240.5 309.0,240.5 311.0,242.5 313.0,240.5 315.0,242.5 317.0,242.5 319.0,241.5 321.0,242.5 323.0,242.5 325.0,241.5 327.0,240.5 329.0,241.5 331.0,241.5 333.0,240.5 335.0,241.5 337.0,242.5 339.0,241.5 341.0,242.5 343.0,241.5 345.0,241.5 347.0,240.5 349.0,242.5 351.0,241.5 353.0,241.5 355.0,240.5 357.0,242.5 359.0,242.5 361.0,241.5 363.0,241.5 365.0,241.5 367.0,240.5 369.0,241.5 371.0,241.0 373.0,237.5 376.0,237.5 378.0,237.5 380.0,241.5 382.0,240.5 384.0,241.5 386.0,242.5 388.0,241.5 390.0,241.5 392.0,241.5 394.0,241.5 396.0,240.5 398.0,241.5 400.0,242.5 402.0,242.5 404.0,241.5 406.0,241.5 408.0,241.0 410.0,238.0 412.0,241.5 414.0,241.5 416.1,241.5 418.1,241.5 420.2,242.5 422.2,241.5 424.3,241.5 426.3,240.5 428.4,241.5 430.4,241.5 432.5,242.5 434.5,241.5 436.6,241.5 438.6,242.5 440.7,241.5 442.7,241.5 444.8,241.5 446.8,241.5 448.9,241.5 450.9,240.5 453.0,241.5 455.0,241.0 457.0,238.0 459.0,241.5 461.0,242.5 463.0,241.5 465.0,241.5 467.0,241.5 469.0,240.5 471.0,241.5 473.0,241.5 475.0,241.5 477.0,241.5 479.0,242.5 481.0,240.5 483.0,241.5 485.0,241.5 487.0,241.0 489.0,236.0 491.0,241.5 493.0,241.5 495.0,242.5 497.0,241.5 499.0,241.5 501.0,242.5 503.0,239.5 505.0,241.5 507.0,241.5 509.0,241.5 511.0,242.5 513.0,241.5 515.0,242.5 517.0,241.5 519.0,240.5 521.0,241.5 523.0,242.5 525.0,241.5 527.0,240.5 529.0,241.5 531.0,240.5 533.0,241.5 535.0,240.5 537.0,242.5 539.0,240.5 541.0,241.5 543.0,240.5 545.0,241.5 546.0,242.5 548.2,242.5 550.3,241.5 552.5,243.5 554.7,243.5 556.8,241.5 559.0,242.5" fill="none" stroke="#c02020" stroke-width="1.0" stroke-opacity="1.0" stroke-linejoin="round"/>
<polyline points="41.3,419.5 43.8,419.5 46.3,418.5 49.7,420.5 53.0,417.5 54.7,417.5 57.6,418.5 60.5,418.3 63.0,410.5 64.7,409.5 67.6,409.5 70.5,410.5 73.0,410.5 75.5,410.8 77.2,407.5 78.0,403.3 78.8,410.0 80.5,412.5 82.2,411.7 83.8,414.2 86.3,410.5 89.7,411.5 93.0,411.5 96.3,411.5 98.8,411.5 100.5,410.5 103.0,410.0 104.7,412.5 106.3,413.5 109.7,414.2 112.2,410.5 114.2,410.5 116.3,409.5 118.8,408.5 121.3,410.5 124.7,410.5 126.3,410.5 128.6,410.5 131.0,408.5 133.3,409.5 135.7,409.5 138.0,409.5 140.0,409.5 142.0,409.5 144.0,409.5 146.0,409.5 148.0,409.5 150.0,409.5 152.0,411.5 153.0,409.0 154.0,402.5 155.0,405.5 157.0,408.5 160.0,411.5 162.0,409.5 164.0,409.5 166.0,409.5 168.0,408.5 170.0,409.5 172.0,409.5 174.0,409.5 176.0,408.5 178.0,409.5 180.0,410.5 182.0,409.5 184.0,409.5 186.0,409.5 188.0,409.5 190.0,410.5 192.0,410.5 194.0,409.5 196.0,410.5 198.0,409.5 200.0,409.5 202.0,409.5 204.0,409.5 206.0,409.5 208.0,408.5 210.0,409.5 212.0,409.5 214.0,408.5 216.0,408.5 218.0,409.5 220.0,409.5 222.0,409.5 224.0,409.5 226.0,409.5 228.0,408.5 230.0,410.5 232.0,410.5 234.0,408.5 236.0,409.5 238.0,408.5 240.0,410.5 242.0,409.5 244.0,408.5 246.0,409.5 248.0,409.5 250.0,410.5 252.0,409.5 254.0,409.5 256.0,409.5 258.0,408.5 260.0,409.5 262.0,410.5 264.0,409.5 266.0,410.5 268.0,409.5 270.0,408.5 272.0,409.5 274.0,410.5 276.0,409.5 278.0,409.5 280.0,409.5 282.0,408.5 284.0,409.5 286.0,409.5 288.0,409.5 290.0,410.5 292.0,410.5 294.0,409.5 296.0,409.5 298.0,409.5 300.0,409.0 301.0,402.5 303.0,409.5 305.1,410.5 307.2,409.5 309.4,409.5 311.5,409.5 313.6,409.5 315.8,409.5 317.9,409.5 320.0,409.5 322.0,409.5 324.0,408.5 326.0,409.5 328.0,409.5 330.0,409.5 332.0,410.5 334.0,410.5 336.0,409.5 338.0,409.0 340.0,400.5 343.0,398.5 345.1,399.5 347.2,398.5 349.2,398.5 351.3,397.5 353.4,397.5 355.5,398.5 357.5,398.5 359.6,398.5 361.7,397.5 363.8,398.5 365.8,398.5 367.9,398.5 370.0,398.5 372.0,396.0 374.0,392.0 376.0,395.0 378.0,391.5 380.0,398.5 382.5,397.5 385.0,397.5 387.0,398.5 389.0,398.5 391.0,397.5 393.0,399.5 395.0,399.5 397.5,400.5 400.0,399.5 402.5,401.5 405.0,402.0 407.0,398.0 408.0,393.0 410.0,387.5 413.0,386.5 415.0,389.5 417.0,389.0 418.0,400.5 420.1,400.5 422.2,398.5 424.4,398.5 426.5,399.5 428.6,398.5 430.8,399.5 432.9,399.5 435.0,398.5 437.1,398.5 439.3,399.5 441.4,399.5 443.6,399.5 445.7,401.5 447.9,400.5 450.0,400.5 452.5,399.0 455.0,396.5 457.0,399.5 459.2,399.5 461.3,399.5 463.5,398.5 465.7,399.5 467.8,400.5 470.0,400.5 472.2,399.5 474.3,398.5 476.5,398.5 478.7,398.5 480.8,399.5 483.0,398.0 486.0,391.0 488.0,395.0 490.0,389.5 492.0,391.0 494.0,398.5 496.0,398.5 498.0,399.5 500.0,398.5 502.0,397.5 504.0,398.5 506.0,398.5 508.0,398.5 510.0,398.5 512.0,400.5 514.0,399.5 516.0,398.5 518.0,400.5 520.0,399.5 521.0,397.0 523.0,399.5 525.0,399.5 527.0,399.5 529.0,398.5 531.0,399.5 533.0,400.5 535.0,398.5 537.0,398.5 539.0,398.5 541.0,398.5 543.0,397.5 544.0,400.0 545.0,409.5 547.0,409.5 549.0,408.5 551.0,409.5 553.0,409.5 555.0,410.5 557.0,409.5 559.0,409.5" fill="none" stroke="#c0c000" stroke-width="1.0" stroke-opacity="1.0" stroke-linejoin="round"/>
</svg>
<div class="t" style="left:28.30px;top:127.00px;font-size:7.200px;line-height:12px;letter-spacing:0.000px;transform:scaleX(0.8327);color:#d8e0f0;-webkit-text-stroke:0.25px currentColor;">100</div>
<div class="t" style="left:35.00px;top:253.00px;font-size:7.200px;line-height:12px;letter-spacing:0.000px;color:#d8e0f0;-webkit-text-stroke:0.25px currentColor;">0</div>
<div class="t" style="left:38.00px;top:259.00px;font-size:7.200px;line-height:12px;letter-spacing:0.000px;transform:scaleX(0.8455);color:#d8e0f0;-webkit-text-stroke:0.25px currentColor;">22:05:43</div>
<div class="t" style="left:561.00px;top:175.00px;font-size:7.200px;line-height:12px;letter-spacing:0.000px;transform:scaleX(0.8368);color:#18b8c0;-webkit-text-stroke:0.25px currentColor;">62</div>
<div class="t" style="left:561.00px;top:198.00px;font-size:7.200px;line-height:12px;letter-spacing:0.000px;transform:scaleX(0.8368);color:#e0e0e0;-webkit-text-stroke:0.25px currentColor;">44</div>
<div class="t" style="left:576.20px;top:202.00px;font-size:7.200px;line-height:12px;letter-spacing:0.000px;color:#c8c800;transform:scaleX(0.85);-webkit-text-stroke:0.25px currentColor;">4096</div>
<div class="t" style="left:561.00px;top:237.00px;font-size:7.200px;line-height:12px;letter-spacing:0.000px;transform:scaleX(0.8715);color:#d03030;-webkit-text-stroke:0.25px currentColor;">13.22</div>
<div class="t" style="left:561.00px;top:253.00px;font-size:7.200px;line-height:12px;letter-spacing:0.000px;color:#00c000;-webkit-text-stroke:0.25px currentColor;">0</div>
<div class="t" style="left:23.30px;top:290.00px;font-size:7.200px;line-height:12px;letter-spacing:0.000px;transform:scaleX(0.8144);color:#d8e0f0;-webkit-text-stroke:0.25px currentColor;">100%</div>
<div class="t" style="left:30.00px;top:415.00px;font-size:7.200px;line-height:12px;letter-spacing:0.000px;transform:scaleX(0.7978);color:#d8e0f0;-webkit-text-stroke:0.25px currentColor;">0%</div>
<div class="t" style="left:560.80px;top:404.00px;font-size:7.200px;line-height:12px;letter-spacing:0.000px;transform:scaleX(0.8554);color:#c8c800;-webkit-text-stroke:0.25px currentColor;">9%</div>
<div class="t" style="left:561.00px;top:415.00px;font-size:7.200px;line-height:12px;letter-spacing:0.000px;transform:scaleX(0.8651);color:#00c000;-webkit-text-stroke:0.25px currentColor;">0%</div>
<div style="position:absolute;left:136.8px;top:120px;width:6.6px;height:6.6px;background:#fff"></div>
<svg style="position:absolute;left:136.8px;top:120px" width="7" height="7" viewBox="0 0 7 7"><path d="M1.3 3.5L2.8 5L5.6 1.7" fill="none" stroke="#404040" stroke-width="1.15"/></svg>
<div class="t" style="left:145.90px;top:118.00px;font-size:7.200px;line-height:12px;letter-spacing:0.000px;transform:scaleX(0.8380);color:#d8c800;-webkit-text-stroke:0.25px currentColor;">CPU Clock (MHz)</div>
<div style="position:absolute;left:199.7px;top:120px;width:6.6px;height:6.6px;background:#fff"></div>
<svg style="position:absolute;left:199.7px;top:120px" width="7" height="7" viewBox="0 0 7 7"><path d="M1.3 3.5L2.8 5L5.6 1.7" fill="none" stroke="#404040" stroke-width="1.15"/></svg>
<div class="t" style="left:208.60px;top:118.00px;font-size:7.200px;line-height:12px;letter-spacing:0.000px;transform:scaleX(0.7814);color:#00d000;-webkit-text-stroke:0.25px currentColor;">CPU (°C)</div>
<div style="position:absolute;left:238.2px;top:120px;width:6.6px;height:6.6px;background:#fff"></div>
<svg style="position:absolute;left:238.2px;top:120px" width="7" height="7" viewBox="0 0 7 7"><path d="M1.3 3.5L2.8 5L5.6 1.7" fill="none" stroke="#404040" stroke-width="1.15"/></svg>
<div class="t" style="left:247.20px;top:118.00px;font-size:7.200px;line-height:12px;letter-spacing:0.000px;transform:scaleX(0.8302);color:#18b8c0;-webkit-text-stroke:0.25px currentColor;">CPU Core #1 (°C)</div>
<div style="position:absolute;left:301.2px;top:120px;width:6.6px;height:6.6px;background:#fff"></div>
<svg style="position:absolute;left:301.2px;top:120px" width="7" height="7" viewBox="0 0 7 7"><path d="M1.3 3.5L2.8 5L5.6 1.7" fill="none" stroke="#404040" stroke-width="1.15"/></svg>
<div class="t" style="left:310.00px;top:118.00px;font-size:7.200px;line-height:12px;letter-spacing:0.000px;transform:scaleX(0.8331);color:#e02828;-webkit-text-stroke:0.25px currentColor;">CPU Package (W)</div>
<div style="position:absolute;left:365.0px;top:120px;width:6.6px;height:6.6px;background:#fff"></div>
<svg style="position:absolute;left:365.0px;top:120px" width="7" height="7" viewBox="0 0 7 7"><path d="M1.3 3.5L2.8 5L5.6 1.7" fill="none" stroke="#404040" stroke-width="1.15"/></svg>
<div class="t" style="left:373.80px;top:118.00px;font-size:7.200px;line-height:12px;letter-spacing:0.000px;transform:scaleX(0.8446);color:#e0e0e0;-webkit-text-stroke:0.25px currentColor;">BIWIN NA80V1M10-512G (°C)</div>
<div class="t" style="left:258.00px;top:282.00px;font-size:7.200px;line-height:12px;letter-spacing:0.000px;transform:scaleX(0.8154);color:#d8c800;-webkit-text-stroke:0.25px currentColor;">CPU Usage</div>
<div style="position:absolute;left:294px;top:284.5px;width:0.8px;height:5.5px;background:#a05050"></div>
<div class="t" style="left:298.40px;top:282.00px;font-size:7.200px;line-height:12px;letter-spacing:0.000px;transform:scaleX(0.9174);color:#00c000;-webkit-text-stroke:0.25px currentColor;">CPU Throttling</div>
<div class="t" style="left:10.00px;top:449.00px;font-size:7.400px;line-height:12px;letter-spacing:0.000px;transform:scaleX(0.9058);color:#1a1a1a;">Remaining Battery:</div>
<div style="position:absolute;left:73.75px;top:448px;width:45.75px;height:13.75px;background:#000"></div>
<div class="t" style="left:83.25px;top:449.00px;font-size:7.800px;line-height:12px;letter-spacing:0.000px;transform:scaleX(0.8451);color:#00d800;">Charging</div>
<div class="t" style="left:133.00px;top:449.00px;font-size:7.400px;line-height:12px;letter-spacing:0.000px;transform:scaleX(0.8726);color:#1a1a1a;">Test Started:</div>
<div style="position:absolute;left:175.5px;top:448px;width:80.75px;height:13.75px;background:#000"></div>
<div class="t" style="left:187.00px;top:449.00px;font-size:7.800px;line-height:12px;letter-spacing:0.000px;transform:scaleX(0.7930);color:#00d800;">26.06.2024 22:05:43</div>
<div class="t" style="left:270.00px;top:449.00px;font-size:7.400px;line-height:12px;letter-spacing:0.000px;transform:scaleX(0.8691);color:#1a1a1a;">Elapsed Time:</div>
<div style="position:absolute;left:317.5px;top:448px;width:46.25px;height:13.75px;background:#000"></div>
<div class="t" style="left:328.75px;top:449.00px;font-size:7.800px;line-height:12px;letter-spacing:0.000px;transform:scaleX(0.7821);color:#00d800;">00:07:14</div>
<div style="position:absolute;left:11px;top:469.5px;width:40.25px;height:11px;box-sizing:border-box;border:1px solid #ececec;background:#f6f6f6;border-radius:2px"></div>
<div class="t" style="left:24.16px;top:470.00px;font-size:6.600px;line-height:12px;letter-spacing:0.000px;color:#a0a0a0;">Start</div>
<div style="position:absolute;left:57px;top:469.5px;width:41px;height:11px;box-sizing:border-box;border:1px solid #d6d6d6;background:#fdfdfd;border-radius:2px"></div>
<div class="t" style="left:70.71px;top:470.00px;font-size:6.600px;line-height:12px;letter-spacing:0.000px;color:#1a1a1a;">Stop</div>
<div style="position:absolute;left:113.75px;top:469.5px;width:41.25px;height:11px;box-sizing:border-box;border:1px solid #d6d6d6;background:#fdfdfd;border-radius:2px"></div>
<div class="t" style="left:126.49px;top:470.00px;font-size:6.600px;line-height:12px;letter-spacing:0.000px;color:#1a1a1a;">Clear</div>
<div style="position:absolute;left:160px;top:469.5px;width:41.25px;height:11px;box-sizing:border-box;border:1px solid #d6d6d6;background:#fdfdfd;border-radius:2px"></div>
<div class="t" style="left:173.10px;top:470.00px;font-size:6.600px;line-height:12px;letter-spacing:0.000px;color:#1a1a1a;">Save</div>
<div style="position:absolute;left:217px;top:469.5px;width:40.5px;height:11px;box-sizing:border-box;border:1px solid #d6d6d6;background:#fdfdfd;border-radius:2px"></div>
<div class="t" style="left:226.98px;top:470.00px;font-size:6.600px;line-height:12px;letter-spacing:0.000px;color:#1a1a1a;">CPUID</div>
<div style="position:absolute;left:263.25px;top:469.5px;width:41.0px;height:11px;box-sizing:border-box;border:1px solid #d6d6d6;background:#fdfdfd;border-radius:2px"></div>
<div class="t" style="left:265.96px;top:470.00px;font-size:6.600px;line-height:12px;letter-spacing:0.000px;color:#1a1a1a;">Preferences</div>
<div style="position:absolute;left:548px;top:469.5px;width:41px;height:11px;box-sizing:border-box;border:1px solid #d6d6d6;background:#fdfdfd;border-radius:2px"></div>
<div class="t" style="left:560.06px;top:470.00px;font-size:6.600px;line-height:12px;letter-spacing:0.000px;color:#1a1a1a;">Close</div>
<svg style="position:absolute;left:0;top:0" width="600" height="491" viewBox="0 0 600 491">
<path d="M485.5,436.8 L565,436.8 L571.7,438.4 L577.8,441.4 L583.9,446.3 L587.6,452.4 L591.2,460.4 L586.8,466 L582.2,469.7 L584,473.3 L578.6,478 L573,478.9 L565.7,478 L558.4,476.1 L549.2,474.3 L540,473.3 L532.7,472.4 L521.7,472.4 L512.5,474.3 L503.3,476.1 L496,477 L495.1,475.2 L493.3,468.8 L490.5,462.3 L487.5,453 L485.8,445 Z" fill="#828282"/>
<path d="M518,467.3 L533,467 M525,470.5 L538,469.5 M546,466 L566,472 M552,465 L578,474 M560,468 L584,476.5 M540,469 L556,474" stroke="#c4c4c4" stroke-width="0.6" opacity="0.7"/>
<path d="M492.8,438 Q493.2,434.6 496.5,434.6 H536 Q541.7,434.6 541.7,439.5 V441 H492.6 Z" fill="#808080"/>
<path d="M514,434.6 L516.8,434.6 L515.6,436.6 Z" fill="#000"/>
<path fill-rule="evenodd" fill="#f4f4f4" d="M495.3,437 H535.5 Q539.5,437 539.5,441 V450 Q539.5,454 535.5,454 H492.3 Q490.6,454 490.9,452.4 L491.4,448.6 H496 L496.2,450 H506 Q508.5,450 508.5,448.3 Q508.5,446.5 506.3,446.5 H500 V442.6 H512.2 Q513.9,442.6 513.7,444.2 L512.9,450.5 H514.2 L516.4,440.3 H494.6 Z M521.6,440.3 H534.5 V448 Q534.5,450.5 532,450.5 H519.6 Z"/>
<text x="533.8" y="455" font-family="Liberation Sans" font-size="11.2" fill="#f4f4f4" stroke="#f4f4f4" stroke-width="0.35" textLength="47" lengthAdjust="spacingAndGlyphs">NEWS</text>
<text x="491.6" y="462.8" font-family="Liberation Sans" font-weight="bold" font-style="italic" font-size="7.6" fill="#eeeeee" textLength="89" lengthAdjust="spacingAndGlyphs">Daily Digital Digest</text>
<text x="561.3" y="478" font-family="Liberation Sans" font-size="6.8" fill="#1a1a1a" opacity="0.35" textLength="16" lengthAdjust="spacingAndGlyphs">Close</text>
</svg>
</body></html>
